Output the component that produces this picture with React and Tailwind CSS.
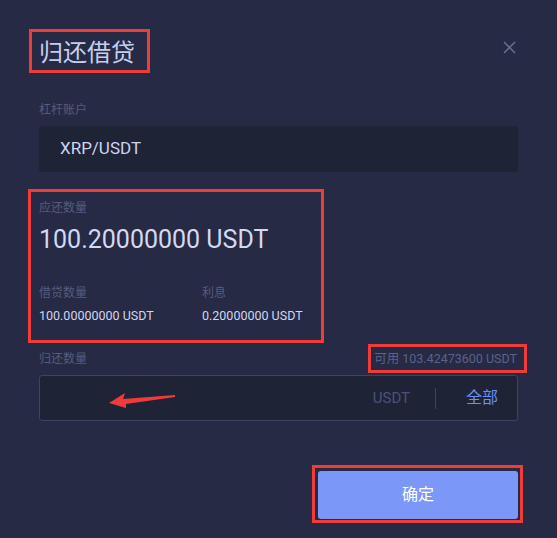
import React from "react";

const F = { fontFamily: "Roboto, 'Noto Sans CJK SC', sans-serif" };

export default function App() {
  return (
    <div
      className="relative w-[557px] h-[538px] bg-[#262a45] overflow-hidden px-[39px] pt-[37px]"
      style={F}
    >
      {/* header */}
      <div className="flex justify-between h-[32px]">
        <div className="text-[24px] leading-[32px] text-[#c6ceec]">归还借贷</div>
        <svg width="13" height="13" viewBox="0 0 13 13" className="mt-[4px] mr-[2px]">
          <path d="M1 1L12 12M12 1L1 12" stroke="#6f7599" strokeWidth="1.3" />
        </svg>
      </div>

      <div className="mt-[33px] text-[12px] leading-[16px] text-[#555c80]">杠杆账户</div>
      <div className="mt-[8px] h-[46px] rounded-[3px] bg-[#1f2336] flex items-center pl-[21px] text-[17px] text-[#cdd4f0]">
        XRP/USDT
      </div>

      <div className="mt-[28px] text-[12px] leading-[16px] text-[#555c80]">应还数量</div>
      <div className="mt-[8px] text-[25px] leading-[32px] text-[#d3d9f3]">100.20000000 USDT</div>

      <div className="mt-[29px] flex">
        <div className="w-[163px]">
          <div className="text-[12px] leading-[16px] text-[#555c80]">借贷数量</div>
          <div className="mt-[7px] text-[12.5px] leading-[16px] text-[#d0d6ee]">100.00000000 USDT</div>
        </div>
        <div>
          <div className="text-[12px] leading-[16px] text-[#555c80]">利息</div>
          <div className="mt-[7px] text-[12.5px] leading-[16px] text-[#d0d6ee]">0.20000000 USDT</div>
        </div>
      </div>

      <div className="mt-[27px] flex justify-between items-center h-[16px]">
        <div className="text-[12px] leading-[16px] text-[#555c80]">归还数量</div>
        <div className="text-[12.5px] leading-[16px] text-[#5b6287] mr-[1px]">可用 103.42473600 USDT</div>
      </div>

      <div className="mt-[8px] h-[46px] rounded-[3px] bg-[#1f2336] border border-[#3c4365] flex items-center justify-end">
        <span className="text-[15px] text-[#4b527a]">USDT</span>
        <div className="ml-[25px] w-px h-[21px] bg-[#3c4365]" />
        <span className="ml-[30px] mr-[19px] text-[16px] text-[#6d8ef6]">全部</span>
      </div>

      <div className="mt-[50px] flex justify-end">
        <button className="w-[200px] h-[48px] rounded-[3px] bg-[#7b98f8] text-white text-[16px]">
          确定
        </button>
      </div>

      {/* annotations */}
      <div className="absolute left-[29px] top-[29px] w-[121px] h-[44px] border-[3px] border-[#f03b3b]" />
      <div className="absolute left-[28px] top-[189px] w-[296px] h-[154px] border-[3px] border-[#f03b3b]" />
      <div className="absolute left-[368px] top-[344px] w-[159px] h-[29px] border-[3px] border-[#f03b3b]" />
      <div className="absolute left-[312px] top-[465px] w-[211px] h-[58px] border-[3px] border-[#f03b3b]" />
      <svg className="absolute left-0 top-0" width="557" height="538">
        <polygon
          points="109,403 125,393 123,399 175,395 175,397 126,404 126,408"
          fill="#f23a3a"
        />
      </svg>
    </div>
  );
}
